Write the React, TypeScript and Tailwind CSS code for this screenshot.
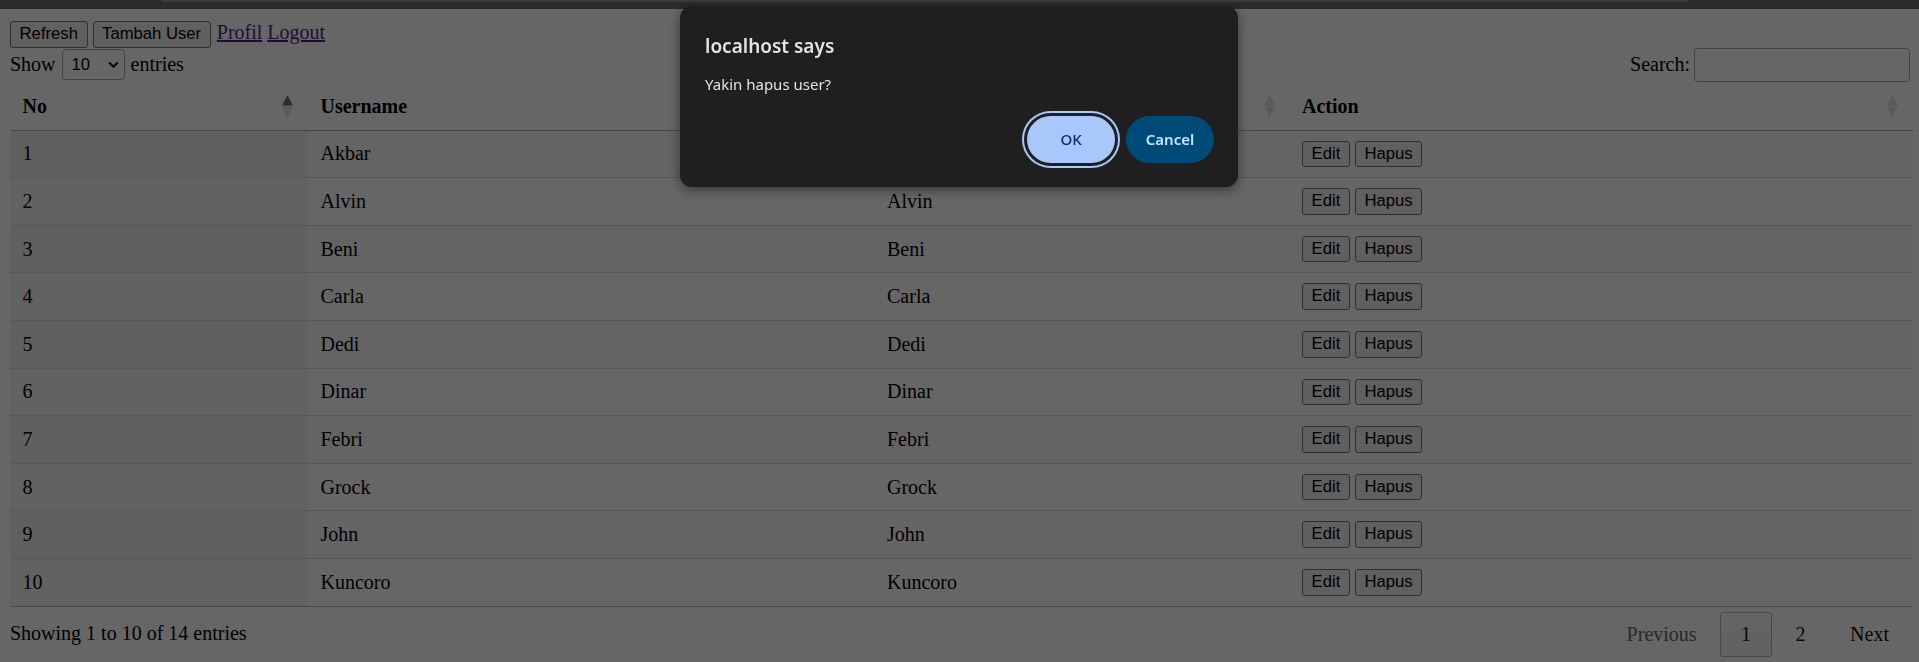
import React from 'react';

const users = ['Akbar', 'Alvin', 'Beni', 'Carla', 'Dedi', 'Dinar', 'Febri', 'Grock', 'John', 'Kuncoro'];

const SortIcon: React.FC<{ active?: boolean }> = ({ active }) => (
    <svg width="11" height="22" viewBox="0 0 11 22" className="shrink-0">
        <polygon points="5.5,0 11,10.5 0,10.5" fill={active ? '#6f6f6f' : '#dedede'} />
        <polygon points="0,11.5 11,11.5 5.5,22" fill="#dedede" />
    </svg>
);

const NativeButton: React.FC<{ children: React.ReactNode }> = ({ children }) => (
    <button className="h-[26.6px] px-[8.6px] rounded-[3px] border border-[#767676] bg-[#efefef] text-[16.67px] leading-none text-black font-['Liberation_Sans',Arial,sans-serif]">
        {children}
    </button>
);

const HeaderCell: React.FC<{ label: string; active?: boolean }> = ({ label, active }) => (
    <th className="pt-[13px] pb-[12px] pl-[12.5px] pr-[15px] text-left font-bold leading-[23px] border-b border-[#b3b3b3]">
        <div className="flex items-center justify-between">
            <span>{label}</span>
            <SortIcon active={active} />
        </div>
    </th>
);

const PageButton: React.FC<{ label: string; current?: boolean; disabled?: boolean }> = ({ label, current, disabled }) => (
    <a
        className={
            current
                ? 'px-[20px] py-[10px] leading-[23px] rounded-[2.5px] border border-[#b3b3b3] bg-linear-to-b from-[#fdfdfd] to-[#f1f1f1] text-[#111]'
                : disabled
                ? 'px-[20px] py-[10px] leading-[23px] rounded-[2.5px] border border-transparent text-[#666]'
                : 'px-[20px] py-[10px] leading-[23px] rounded-[2.5px] border border-transparent text-[#111]'
        }
    >
        {label}
    </a>
);

const App: React.FC = () => {
    return (
        <div className="h-screen flex flex-col overflow-hidden bg-white text-black text-[20px] font-['Liberation_Serif','Times_New_Roman',serif]">
            {/* browser toolbar edge */}
            <div className="h-[9px] shrink-0 bg-[#2b2b2b] flex">
                <div className="ml-[161px] w-[1528px] h-[2px] rounded-b-[3px] bg-[#3b3b3b]" />
            </div>

            <div className="relative flex-1 px-[10px]">
                <div className="flex items-baseline gap-[5px] pt-[12px]">
                    <NativeButton>Refresh</NativeButton>
                    <NativeButton>Tambah User</NativeButton>
                    <a className="ml-[1px] underline text-[#551a8b] leading-[23px]">Profil</a>
                    <a className="underline text-[#551a8b] leading-[23px]">Logout</a>
                </div>

                <div className="flex items-center justify-between h-[34px] w-[1900px]">
                    <div className="flex items-center leading-[23px]">
                        <span>Show</span>
                        <div className="relative mx-[6px]">
                            <select className="appearance-none w-[63px] h-[31px] pl-[9px] rounded-[3.75px] border border-[#aaaaaa] bg-transparent text-[16.67px] text-black font-['Liberation_Sans',Arial,sans-serif]">
                                <option>10</option>
                                <option>25</option>
                                <option>50</option>
                                <option>100</option>
                            </select>
                            <svg className="absolute right-[6px] top-[11.5px]" width="11" height="8" viewBox="0 0 11 8">
                                <path d="M1.2 1.5 L5.5 5.8 L9.8 1.5" fill="none" stroke="#111" strokeWidth="2" />
                            </svg>
                        </div>
                        <span>entries</span>
                    </div>
                    <div className="flex items-center leading-[23px]">
                        <span>Search:</span>
                        <input className="ml-[4px] w-[216px] h-[34px] px-[6px] rounded-[3.75px] border border-[#aaaaaa] bg-transparent" />
                    </div>
                </div>

                <table className="w-[1903px] table-fixed border-separate border-spacing-0 border-b border-[#b3b3b3]">
                    <colgroup>
                        <col className="w-[298px]" />
                        <col className="w-[566.5px]" />
                        <col className="w-[415px]" />
                        <col className="w-[623.5px]" />
                    </colgroup>
                    <thead>
                        <tr>
                            <HeaderCell label="No" active />
                            <HeaderCell label="Username" />
                            <HeaderCell label="Nama" />
                            <HeaderCell label="Action" />
                        </tr>
                    </thead>
                    <tbody>
                        {users.map((name, i) => {
                            const odd = i % 2 === 0;
                            const border = i === 0 ? '' : 'border-t border-[#d9d9d9]';
                            return (
                                <tr key={name} className={odd ? 'bg-[#f9f9f9]' : 'bg-white'}>
                                    <td className={`py-[10px] px-[12.5px] leading-[23px] align-middle ${border} ${odd ? 'bg-[#efefef]' : 'bg-[#f4f5f8]'}`}>{i + 1}</td>
                                    <td className={`py-[10px] px-[12.5px] leading-[23px] align-middle ${border}`}>{name}</td>
                                    <td className={`py-[10px] px-[12.5px] leading-[23px] align-middle ${border}`}>{name}</td>
                                    <td className={`py-[10px] px-[12.5px] leading-[23px] align-middle ${border}`}>
                                        <div className="flex gap-[5px]">
                                            <NativeButton>Edit</NativeButton>
                                            <NativeButton>Hapus</NativeButton>
                                        </div>
                                    </td>
                                </tr>
                            );
                        })}
                    </tbody>
                </table>

                <div className="flex justify-between items-start w-[1900px]">
                    <div className="pt-[15px] leading-[23px]">Showing 1 to 10 of 14 entries</div>
                    <div className="pt-[5px] flex gap-[2.5px]">
                        <PageButton label="Previous" disabled />
                        <PageButton label="1" current />
                        <PageButton label="2" />
                        <PageButton label="Next" />
                    </div>
                </div>

                {/* alert backdrop */}
                <div className="absolute inset-0 bg-black/60" />
            </div>

            {/* confirm dialog */}
            <div className="fixed left-[680px] top-[6px] w-[558px] rounded-[12px] bg-[#1f1f1f] pt-[27px] pl-[25px] pr-[24px] pb-[24px] shadow-[0_3px_12px_rgba(0,0,0,0.45)] font-['Noto_Sans',sans-serif] text-[#e3e3e3]">
                <div className="text-[19px] leading-[26px] font-semibold">localhost says</div>
                <div className="mt-[15px] text-[15px] leading-[20px]">Yakin hapus user?</div>
                <div className="mt-[22px] flex justify-end gap-[11px]">
                    <button className="w-[88px] h-[47px] rounded-full bg-[#a8c7fa] text-[#062e6f] text-[15px] font-medium ring-2 ring-[#a8c7fa] ring-offset-[3px] ring-offset-[#1f1f1f]">
                        OK
                    </button>
                    <button className="w-[88px] h-[47px] rounded-full bg-[#004a77] text-[#c2e7ff] text-[15px] font-semibold">
                        Cancel
                    </button>
                </div>
            </div>
        </div>
    );
};

export default App;
